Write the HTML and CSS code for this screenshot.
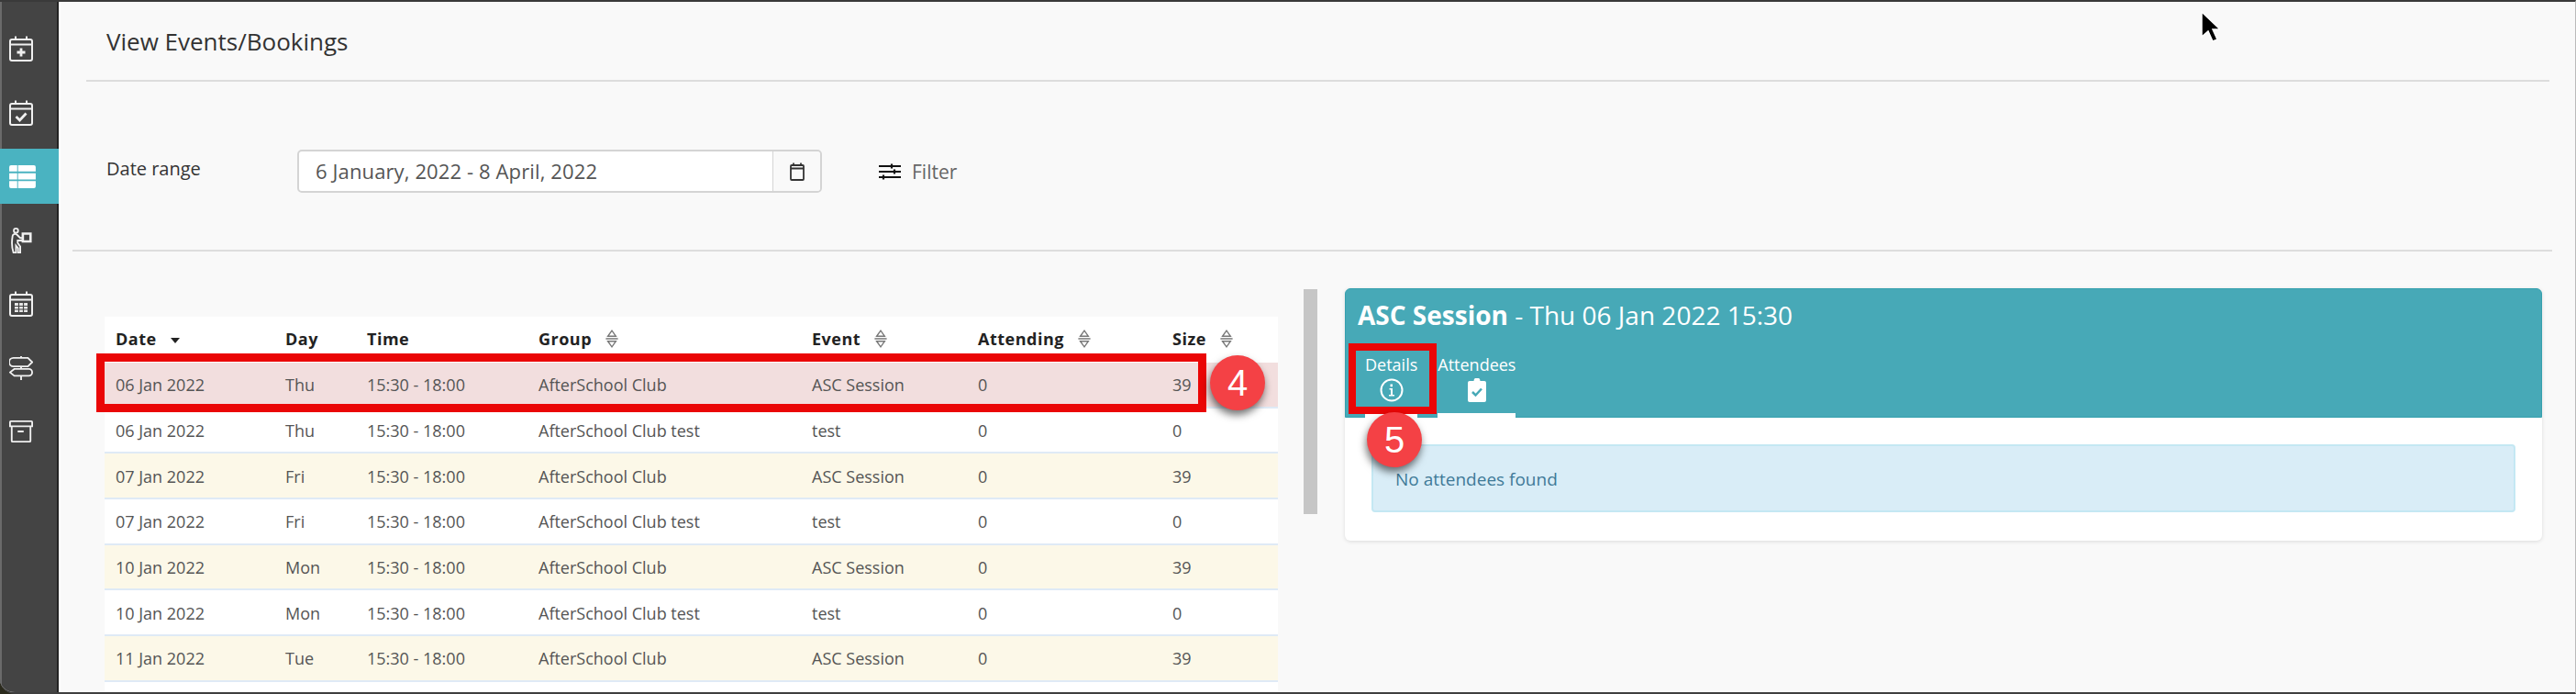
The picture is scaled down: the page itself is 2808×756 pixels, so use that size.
FILE: index.html
```html
<!DOCTYPE html>
<html>
<head>
  <meta charset="utf-8">
  <title>View Events/Bookings</title>
  <link rel="stylesheet" href="styles.css">
</head>
<body>
  <div class="app">
    <nav class="sidebar">
      <a class="nav-item">
        <svg viewBox="0 0 26 28" class="nav-icon"><path d="M3 4h20a2 2 0 0 1 2 2v19a2 2 0 0 1-2 2H3a2 2 0 0 1-2-2V6a2 2 0 0 1 2-2zM1 9.500h24M7 0.500v3.500M19 0.500v3.500"/><path d="M13 13.500v9M8.500 18h9" class="bold"/></svg>
      </a>
      <a class="nav-item">
        <svg viewBox="0 0 26 28" class="nav-icon"><path d="M3 4h20a2 2 0 0 1 2 2v19a2 2 0 0 1-2 2H3a2 2 0 0 1-2-2V6a2 2 0 0 1 2-2zM1 9.500h24M7 0.500v3.500M19 0.500v3.500"/><path d="M7.500 18l4 4 7-7.500" class="bold"/></svg>
      </a>
      <a class="nav-item active">
        <svg viewBox="0 0 30 26" class="nav-icon-table"><path d="M2 0h7v7H0V2a2 2 0 0 1 2-2zM10 0h18a2 2 0 0 1 2 2v5H10zM0 9h9v7H0zM10 9h20v7H10zM0 18h9v8H2a2 2 0 0 1-2-2zM10 18h20v6a2 2 0 0 1-2 2H10z"/></svg>
      </a>
      <a class="nav-item">
        <svg viewBox="0 0 26 30" class="nav-icon"><circle cx="7" cy="3.500" r="2.500"/><path d="M3 10c0-2 3-3.500 5-2l4 4h3v3H9v3l3 4v7H9.500v-5L7 21v8H4c-2-6-2-13-1-19z"/><path d="M15 7h9v9h-9z" class="bold"/></svg>
      </a>
      <a class="nav-item">
        <svg viewBox="0 0 26 28" class="nav-icon"><path d="M3 4h20a2 2 0 0 1 2 2v19a2 2 0 0 1-2 2H3a2 2 0 0 1-2-2V6a2 2 0 0 1 2-2zM1 9.500h24M7 0.500v3.500M19 0.500v3.500"/><path d="M6 13h14v10H6z" class="solid"/><path d="M6 16.500h14M6 20h14M10.500 13v10M15.500 13v10" class="grid"/></svg>
      </a>
      <a class="nav-item">
        <svg viewBox="0 0 28 28" class="nav-icon"><path d="M14 0v2M14 12v3M14 23v5M5 2h17l5 5-5 5H5a5 5 0 0 1 0-10zM6 15h17a4 4 0 0 1 0 8H6l-5-4z"/></svg>
      </a>
      <a class="nav-item">
        <svg viewBox="0 0 28 26" class="nav-icon"><path d="M2 1h24a1 1 0 0 1 1 1v5H1V2a1 1 0 0 1 1-1zM3 7v17a1 1 0 0 0 1 1h20a1 1 0 0 0 1-1V7M10 13h7"/></svg>
      </a>
    </nav>

    <main class="main">
      <header class="page-head">
        <h1 class="page-title">View Events/Bookings</h1>
      </header>

      <section class="filter-row">
        <label class="filter-label">Date range</label>
        <div class="date-input">
          <span class="date-value">6 January, 2022 - 8 April, 2022</span>
          <span class="date-addon">
            <svg viewBox="0 0 16 20" class="date-icon"><path d="M2 3h12a1 1 0 0 1 1 1v14a1 1 0 0 1-1 1H2a1 1 0 0 1-1-1V4a1 1 0 0 1 1-1zM1 6.500h14M4 0.500v3M12 0.500v3"/></svg>
          </span>
        </div>
        <a class="filter-link">
          <svg viewBox="0 0 24 20" class="filter-icon"><path d="M0 4h24M0 10h24M0 16h24M14 1.500v5M17 7.500v5M5 13.500v5"/></svg>
          <span>Filter</span>
        </a>
      </section>

      <section class="content">
        <div class="table-card">
          <div class="row head">
            <div>Date <span class="sort-down"></span></div>
            <div>Day</div>
            <div>Time</div>
            <div class="sortable">Group <svg viewBox="0 0 12 20" class="sort-icon"><path d="M2 7.500L6 2l4 5.500zM2 12.500L6 18l4-5.500zM0 10h12"/></svg></div>
            <div class="sortable">Event <svg viewBox="0 0 12 20" class="sort-icon"><path d="M2 7.500L6 2l4 5.500zM2 12.500L6 18l4-5.500zM0 10h12"/></svg></div>
            <div class="sortable">Attending <svg viewBox="0 0 12 20" class="sort-icon"><path d="M2 7.500L6 2l4 5.500zM2 12.500L6 18l4-5.500zM0 10h12"/></svg></div>
            <div class="sortable">Size <svg viewBox="0 0 12 20" class="sort-icon"><path d="M2 7.500L6 2l4 5.500zM2 12.500L6 18l4-5.500zM0 10h12"/></svg></div>
          </div>
          <div class="row selected"><div>06 Jan 2022</div><div>Thu</div><div>15:30 - 18:00</div><div>AfterSchool Club</div><div>ASC Session</div><div>0</div><div>39</div></div>
          <div class="row"><div>06 Jan 2022</div><div>Thu</div><div>15:30 - 18:00</div><div>AfterSchool Club test</div><div>test</div><div>0</div><div>0</div></div>
          <div class="row cream"><div>07 Jan 2022</div><div>Fri</div><div>15:30 - 18:00</div><div>AfterSchool Club</div><div>ASC Session</div><div>0</div><div>39</div></div>
          <div class="row"><div>07 Jan 2022</div><div>Fri</div><div>15:30 - 18:00</div><div>AfterSchool Club test</div><div>test</div><div>0</div><div>0</div></div>
          <div class="row cream"><div>10 Jan 2022</div><div>Mon</div><div>15:30 - 18:00</div><div>AfterSchool Club</div><div>ASC Session</div><div>0</div><div>39</div></div>
          <div class="row"><div>10 Jan 2022</div><div>Mon</div><div>15:30 - 18:00</div><div>AfterSchool Club test</div><div>test</div><div>0</div><div>0</div></div>
          <div class="row cream"><div>11 Jan 2022</div><div>Tue</div><div>15:30 - 18:00</div><div>AfterSchool Club</div><div>ASC Session</div><div>0</div><div>39</div></div>
          <div class="row"></div>

          <div class="callout-row"></div>
          <div class="step step-4">4</div>
        </div>

        <div class="splitter"></div>

        <div class="panel">
          <div class="panel-head">
            <h2 class="panel-title"><b>ASC Session</b> - Thu 06 Jan 2022 15:30</h2>
            <div class="tabs">
              <a class="tab">
                <span>Details</span>
                <svg viewBox="0 0 26 26" class="tab-icon"><circle cx="13" cy="13" r="11.500" class="tab-ring"/><path d="M10.500 11h3.500v7h2v1.500h-6V18h2v-5.500h-1.500zM11.500 6.500h2.500v2.800h-2.500z" class="tab-fill"/></svg>
              </a>
              <a class="tab">
                <span>Attendees</span>
                <svg viewBox="0 0 22 26" class="tab-icon"><path d="M3 3h4.500a3.500 3.500 0 0 1 7 0H19a2 2 0 0 1 2 2v19a2 2 0 0 1-2 2H3a2 2 0 0 1-2-2V5a2 2 0 0 1 2-2z" class="tab-fill"/><path d="M6 15l3.500 3.500 6.500-7" class="tab-check"/></svg>
              </a>
            </div>
          </div>
          <div class="panel-body">
            <div class="alert">No attendees found</div>
          </div>
          <div class="callout-tab"></div>
          <div class="step step-5">5</div>
        </div>
      </section>

      <svg viewBox="0 0 22 36" class="cursor"><path d="M2 2v27l7-6 5 11 5-2-5-11h8z"/></svg>
    </main>
  </div>
</body>
</html>
```

FILE: styles.css
```css
* {
  box-sizing: border-box;
}

html, body {
  margin: 0;
  height: 756px;
  overflow: hidden;
  background: #2b2a1c;
}

body {
  font-family: "Open Sans", sans-serif;
  color: #333;
}

.app {
  display: flex;
  height: 756px;
  border-top: 2px solid #3a3a3a;
  border-bottom: 2px solid #3f3f3f;
  border-right: 1px solid #bbb;
  border-bottom-left-radius: 16px;
  overflow: hidden;
  background: #f9f9f9;
}

/* sidebar */

.sidebar {
  width: 64px;
  flex: none;
  display: flex;
  flex-direction: column;
  gap: 9.500px;
  padding-top: 21px;
  background: #444;
  border-left: 2px solid #6a6a6a;
  border-right: 2px solid #222;
}

.nav-item {
  height: 60px;
  display: flex;
  align-items: center;
  margin: 0 -2px;
  padding-left: 10px;
}

.nav-item.active {
  background: #4ab3c1;
}

.nav-icon {
  width: 26px;
  height: 28px;
  fill: none;
  stroke: #f0f0f0;
  stroke-width: 2;
}

.nav-icon .bold {
  stroke-width: 2.800;
}

.nav-icon .solid {
  fill: #e8e8e8;
  stroke: none;
}

.nav-icon .grid {
  stroke: #444;
  stroke-width: 1.200;
}

.nav-icon-table {
  width: 29px;
  height: 25px;
  fill: #fff;
}

/* page head and filter */

.main {
  flex: 1;
  position: relative;
  min-width: 0;
  border-left: 2px solid #fff;
}

.page-head {
  height: 87px;
  margin: 0 28px;
  padding: 25px 0 0 22px;
  border-bottom: 2px solid #ddd;
}

.page-title {
  margin: 0;
  font-size: 26px;
  font-weight: 400;
  line-height: 36px;
  color: #333;
}

.filter-row {
  height: 185px;
  margin: 0 25px 0 13px;
  padding: 12px 0 0 37px;
  display: flex;
  align-items: center;
  border-bottom: 2px solid #ddd;
}

.filter-label {
  width: 208px;
  font-size: 20px;
  margin-top: -7px;
}

.date-input {
  width: 572px;
  height: 47px;
  display: flex;
  background: #fff;
  border: 2px solid #d4d4d4;
  border-radius: 5px;
}

.date-value {
  flex: 1;
  padding-left: 18px;
  font-size: 22px;
  letter-spacing: 0.120px;
  line-height: 42px;
  color: #555;
}

.date-addon {
  width: 52px;
  display: flex;
  align-items: center;
  justify-content: center;
  background: #f9f9f9;
  border-left: 1px solid #d4d4d4;
  border-radius: 0 4px 4px 0;
}

.date-icon {
  width: 16px;
  height: 20px;
  fill: none;
  stroke: #333;
  stroke-width: 1.800;
}

.filter-link {
  display: flex;
  align-items: center;
  gap: 12px;
  margin: 0 0 0 62px;
  font-size: 21px;
  color: #666;
}

.filter-icon {
  width: 24px;
  height: 20px;
  fill: none;
  stroke: #111;
  stroke-width: 2.200;
}

/* layout of the two columns */

.content {
  display: flex;
  align-items: flex-start;
}

/* events table */

.table-card {
  position: relative;
  width: 1279px;
  flex: none;
  margin: 71px 0 0 48px;
  background: #fff;
}

.row {
  display: grid;
  grid-template-columns: 185px 89px 187px 298px 181px 212px 1fr;
  align-items: center;
  height: 49.700px;
  padding: 1px 0 0 12px;
  font-size: 18px;
  color: #555;
  border-bottom: 2px solid #dfeaf6;
}

.row.head {
  height: 50px;
  padding: 0 0 2px 12px;
  font-weight: 700;
  color: #222;
  border-bottom: none;
  letter-spacing: 0.500px;
}

.row.selected {
  background: #f2dede;
}

.row.cream {
  background: #fcf8e8;
}

.sortable {
  display: flex;
  align-items: center;
  gap: 15px;
}

.sort-down {
  display: inline-block;
  width: 0;
  height: 0;
  margin: 0 0 0 10px;
  vertical-align: middle;
  border-left: 5.500px solid transparent;
  border-right: 5.500px solid transparent;
  border-top: 6px solid #222;
}

.sort-icon {
  width: 14px;
  height: 22px;
  fill: none;
  stroke: #777;
  stroke-width: 1.200;
}

.callout-row {
  position: absolute;
  left: -9px;
  top: 40px;
  width: 1210px;
  height: 64px;
  border: 9px solid #ea0606;
}

.step {
  position: absolute;
  width: 60px;
  height: 60px;
  display: flex;
  align-items: center;
  justify-content: center;
  font-family: "Liberation Sans", Arial, sans-serif;
  font-size: 40px;
  color: #fff;
  background: #f44145;
  border-radius: 50%;
  box-shadow: -1px 5px 8px rgba(0, 0, 0, 0.55);
}

.step-4 {
  left: 1205px;
  top: 42px;
}

/* splitter between table and detail */

.splitter {
  width: 15px;
  height: 245px;
  flex: none;
  margin: 41px 0 0 28px;
  background: #c6c6c6;
}

/* detail panel */

.panel {
  position: relative;
  width: 1305px;
  flex: none;
  margin: 40px 0 0 30px;
  height: 275px;
  background: #fff;
  border-radius: 6px;
  box-shadow: 0 1px 4px rgba(0, 0, 0, 0.12);
}

.panel-head {
  height: 141px;
  padding-top: 9px;
  background: #47a9b7;
  border: 1px solid #35a0ae;
  border-radius: 6px 6px 0 0;
  color: #fff;
}

.panel-title {
  margin: 0 0 0 13px;
  font-size: 28px;
  font-weight: 400;
  line-height: 38px;
}

.panel-title b {
  font-weight: 700;
}

.tabs {
  display: flex;
  gap: 22px;
  margin: 23px 0 0 21px;
}

.tab {
  display: flex;
  flex-direction: column;
  align-items: center;
  height: 70px;
  font-size: 18px;
  line-height: 24px;
  border-bottom: 5px solid #fff;
}

.tab-icon {
  width: 26px;
  height: 26px;
  margin-top: 3px;
}

.tab-ring {
  fill: none;
  stroke: #fff;
  stroke-width: 2;
}

.tab-fill {
  fill: #fff;
}

.tab-check {
  fill: none;
  stroke: #47a9b7;
  stroke-width: 2.500;
}

.panel-body {
  padding: 29px 29px 0;
}

.alert {
  height: 74px;
  padding-left: 24px;
  font-size: 19px;
  line-height: 72px;
  color: #3f7a98;
  background: #d9edf7;
  border: 2px solid #c4e8f3;
  border-radius: 4px;
}

.callout-tab {
  position: absolute;
  left: 4px;
  top: 60px;
  width: 96px;
  height: 77px;
  border: 8.500px solid #ea0606;
}

.step-5 {
  left: 24px;
  top: 135px;
}

.cursor {
  position: absolute;
  left: 2332px;
  top: 9px;
  width: 22px;
  height: 36px;
  fill: #000;
  stroke: #fff;
  stroke-width: 1.500;
}
```
